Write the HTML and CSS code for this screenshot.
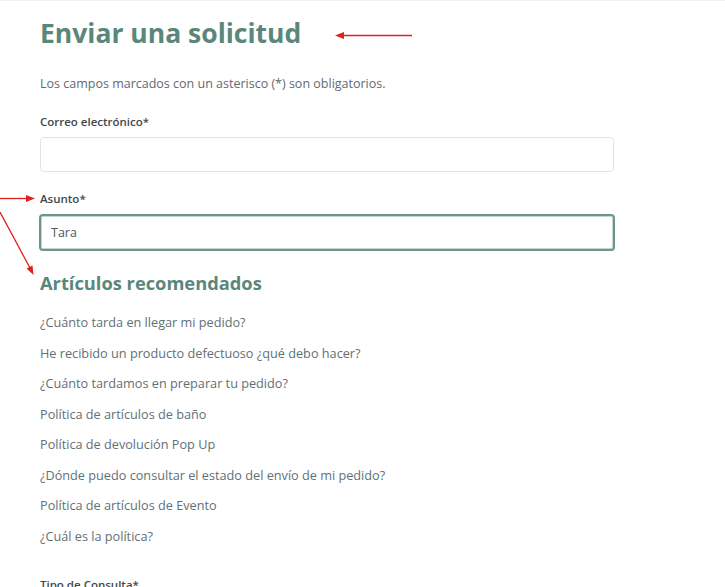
FILE: index.html
```html
<!DOCTYPE html>
<html lang="es">
<head>
  <meta charset="UTF-8" />
  <meta name="viewport" content="width=device-width, initial-scale=1.0" />
  <title>Enviar una solicitud</title>
  <link rel="stylesheet" href="styles.css">
</head>
<body>
  <div class="container">
    <h1>Enviar una solicitud</h1>
    <p class="note">Los campos marcados con un asterisco (*) son obligatorios.</p>

    <div class="form-group">
      <label for="email">Correo electrónico*</label>
      <input type="email" id="email" />
    </div>

    <div class="form-group">
      <label for="asunto">Asunto*</label>
      <input type="text" id="asunto" class="focused" value="Tara" />
    </div>

    <div class="suggestions">
      <h2>Artículos recomendados</h2>
      <ul>
        <li><a href="#">¿Cuánto tarda en llegar mi pedido?</a></li>
        <li><a href="#">He recibido un producto defectuoso ¿qué debo hacer?</a></li>
        <li><a href="#">¿Cuánto tardamos en preparar tu pedido?</a></li>
        <li><a href="#">Política de artículos de baño</a></li>
        <li><a href="#">Política de devolución Pop Up</a></li>
        <li><a href="#">¿Dónde puedo consultar el estado del envío de mi pedido?</a></li>
        <li><a href="#">Política de artículos de Evento</a></li>
        <li><a href="#">¿Cuál es la política?</a></li>
      </ul>
    </div>

    <div class="form-group last">
      <label for="tipo">Tipo de Consulta*</label>
    </div>
  </div>

  <!-- flechas de anotación -->
  <svg class="marks" width="725" height="587" viewBox="0 0 725 587">
    <g stroke="#e0201e" stroke-width="1.3" fill="#e0201e">
      <line x1="412" y1="35.5" x2="342" y2="35.5" />
      <polygon points="335,35.5 344,32 344,39" stroke="none" />
      <line x1="0" y1="198.5" x2="28" y2="198.5" />
      <polygon points="35,198.5 26,195 26,202" stroke="none" />
      <line x1="0" y1="212" x2="30" y2="268" />
      <polygon points="33.5,275 26.5,268.5 32.5,265.5" stroke="none" />
    </g>
  </svg>
</body>
</html>
```

FILE: styles.css
```css
body {
  margin: 0;
  font-family: "Open Sans", "Noto Sans", Arial, sans-serif;
  background: #fff;
  color: #333;
  border-top: 1px solid #f2f2f2;
  height: 586px;
  overflow: hidden;
}
.container {
  width: 575px;
  padding: 0 0 0 40px;
}
h1 {
  margin: 14px 0 0;
  font-size: 26.5px;
  line-height: 36px;
  font-weight: 700;
  color: #5b877b;
}
.note {
  margin: 24px 0 0;
  font-size: 12.5px;
  line-height: 18px;
  color: #5f6b6f;
}
.form-group {
  margin-top: 20px;
}
.form-group + .form-group {
  margin-top: 18px;
}
label {
  display: block;
  font-size: 11.5px;
  line-height: 18px;
  font-weight: 600;
  color: #41484b;
  margin-bottom: 6px;
}
input {
  display: block;
  box-sizing: border-box;
  width: 574px;
  height: 35px;
  padding: 0 10px;
  border: 1px solid #e2e5e4;
  border-radius: 4px;
  font-family: inherit;
  font-size: 12.5px;
  color: #555;
  outline: none;
}
input.focused {
  width: 576px;
  height: 37px;
  margin-left: -1px;
  border: 2px solid #6f9489;
  box-shadow: inset 0 0 0 1px #c5d6d0;
}
.suggestions h2 {
  margin: 20px 0 0;
  font-size: 18.3px;
  line-height: 24px;
  font-weight: 700;
  color: #5b877b;
}
.suggestions ul {
  list-style: none;
  margin: 18px 0 0;
  padding: 0;
}
.suggestions li {
  height: 30.5px;
  font-size: 12.7px;
  line-height: 18px;
}
.suggestions a {
  color: #627075;
  text-decoration: none;
}
.form-group.last {
  margin-top: 19px;
}
.marks {
  position: absolute;
  left: 0;
  top: 0;
  pointer-events: none;
}
```
